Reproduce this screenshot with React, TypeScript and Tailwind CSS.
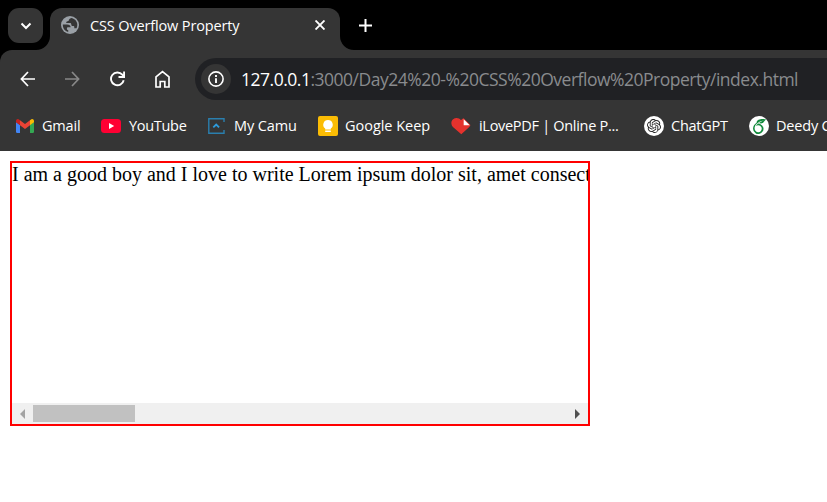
import type { ReactNode } from "react";
import { SiOpenai, SiOverleaf } from "react-icons/si";

const Globe = () => (
  <svg width="18" height="18" viewBox="0 0 18 18">
    <circle cx="9" cy="9" r="9" fill="#9aa0a6" />
    <path d="M1.800 8.600h4.200c2.400 0 3.600.9 3.600 2.700H7.300c-.9 0-1.400.5-1.400 1.400 0 .8.500 1.300 1.300 1.300v2C4 15.400 1.800 12.500 1.800 8.600z" fill="#353535" />
    <path d="M10.800 1.900C9.400 2.100 7.900 2.900 7.900 4.100c0 .8-.5 1.100-1.300 1.200-1 .2-1.400.8-1.400 1.600h3.800c.9 0 1.300.7 1.300 1.500 0 1 .7 1.500 1.600 1.500h.5c.7 0 .9.5.9 1.200v1.100h2.300c2-4.600-.300-9-4.800-10.300z" fill="#353535" />
  </svg>
);

const Gmail = () => (
  <svg width="18" height="14" viewBox="0 0 18 14">
    <path d="M0 3l4 3v8H1.300A1.300 1.300 0 0 1 0 12.700z" fill="#4285f4" />
    <path d="M14 6l4-3v9.700a1.300 1.300 0 0 1-1.300 1.300H14z" fill="#34a853" />
    <path d="M4 1.300l5 3.800 5-3.800V6.300L9 10 4 6.300z" fill="#ea4335" />
    <path d="M0 3V2C0 .2 2-.6 3.300.7L4 1.300v5L0 3.300z" fill="#c5221f" />
    <path d="M18 3V2c0-1.800-2-2.600-3.300-1.300l-.7.6v5l4-3z" fill="#fbbc04" />
  </svg>
);

const YouTube = () => (
  <svg width="20" height="14" viewBox="0 0 20 14">
    <rect width="20" height="14" rx="3.500" fill="#ff0033" />
    <path d="M8 4l5.200 3L8 10z" fill="#fff" />
  </svg>
);

const Camu = () => (
  <svg width="17" height="16" viewBox="0 0 17 16" fill="none" stroke="#2a7fae" strokeWidth="1.400">
    <path d="M16 4V.8H.8v14.400H16V12" />
    <path d="M5.300 9.400L8.200 6.500l2.900 2.900" stroke="#2d9bdb" strokeWidth="1.800" />
  </svg>
);

const Keep = () => (
  <svg width="20" height="20" viewBox="0 0 20 20">
    <rect width="20" height="20" rx="2" fill="#fbbc04" />
    <path d="M10 4a4.700 4.700 0 0 0-2.800 8.500V13.500h5.600v-1A4.700 4.700 0 0 0 10 4zM7.200 14.500h5.600V16H7.200z" fill="#fff" />
  </svg>
);

const LovePdf = () => (
  <svg width="20" height="18" viewBox="0 0 20 18">
    <path d="M10.300 17.300L2.200 10.200C-.3 7.800-.2 4 2.100 2.200 4.700.1 8.200.7 10 3.300 10.700 2.300 11.600 1.600 12.600 1.300L19.400 8C19.200 9 18.700 9.600 18 10.300z" fill="#e5322d" />
    <path d="M12.700 2.300l6 6h-6z" fill="#fff" />
  </svg>
);

const ChatGpt = () => (
  <span className="flex size-5 items-center justify-center rounded-full bg-white">
    <SiOpenai size={14} color="#222222" />
  </span>
);

const Overleaf = () => (
  <span className="flex size-5 items-center justify-center rounded-full bg-white">
    <SiOverleaf size={15} color="#138a3d" />
  </span>
);

type Bookmark = { label: string; icon: ReactNode; item: string; slot: string; text: string };

const bookmarks: Bookmark[] = [
  { label: "Gmail", icon: <Gmail />, item: "w-[85px]", slot: "w-[26px]", text: "tracking-[-0.2px]" },
  { label: "YouTube", icon: <YouTube />, item: "w-[107px]", slot: "w-[28px]", text: "tracking-[-0.3px]" },
  { label: "My Camu", icon: <Camu />, item: "w-[110px]", slot: "w-[26px]", text: "tracking-[-0.1px]" },
  { label: "Google Keep", icon: <Keep />, item: "w-[133px]", slot: "w-[27px]", text: "tracking-[-0.03px]" },
  { label: "iLovePDF | Online P...", icon: <LovePdf />, item: "w-[193px]", slot: "w-[28px]", text: "tracking-[-0.3px]" },
  { label: "ChatGPT", icon: <ChatGpt />, item: "w-[105px]", slot: "w-[27px]", text: "tracking-[-0.25px]" },
  { label: "Deedy CV", icon: <Overleaf />, item: "w-[110px]", slot: "w-[27px]", text: "tracking-[-0.2px]" },
];

function TabStrip() {
  return (
    <div className="flex h-[50px] pl-2 pt-2">
      <div className="flex size-[35px] items-center justify-center rounded-[11px] bg-[#353535]">
        <svg width="12" height="8" viewBox="0 0 12 8" fill="none" stroke="#fff" strokeWidth="2">
          <path d="M1.500 1.500L6 6l4.500-4.500" />
        </svg>
      </div>
      <div className="relative ml-[7px] flex h-[42px] w-[290px] items-center rounded-t-[12px] bg-[#353535] pb-[8px] pl-[11px]">
        <svg className="absolute -left-[14px] bottom-0" width="14" height="14" viewBox="0 0 14 14">
          <path d="M14 0v14H0A14 14 0 0 0 14 0z" fill="#353535" />
        </svg>
        <svg className="absolute -right-[14px] bottom-0" width="14" height="14" viewBox="0 0 14 14">
          <path d="M0 0v14h14A14 14 0 0 1 0 0z" fill="#353535" />
        </svg>
        <Globe />
        <span className="ml-[11px] w-[225px] pt-px text-[14.5px] tracking-[-0.14px]">CSS Overflow Property</span>
        <svg width="10" height="10" viewBox="0 0 10 10" className="shrink-0" stroke="#fff" strokeWidth="1.900">
          <path d="M.5.5l9 9M9.500.5l-9 9" />
        </svg>
      </div>
      <svg className="ml-[19px] mt-[11px]" width="13" height="13" viewBox="0 0 13 13" stroke="#fff" strokeWidth="2">
        <path d="M6.500 0v13M0 6.500h13" />
      </svg>
    </div>
  );
}

function Toolbar() {
  return (
    <div className="flex h-[58px] items-center pl-[20px]">
      <svg className="shrink-0" width="15" height="16" viewBox="0 0 15 16" fill="none" stroke="#fff" strokeWidth="1.700">
        <path d="M15 8H1.500M8 1L1.400 8 8 15" />
      </svg>
      <svg className="ml-[30px] shrink-0" width="15" height="16" viewBox="0 0 15 16" fill="none" stroke="#888888" strokeWidth="1.700">
        <path d="M0 8h13.500M7 1l6.600 7L7 15" />
      </svg>
      <svg className="ml-[30px] shrink-0" width="15" height="16" viewBox="0 0 15 16" fill="none" stroke="#fff" strokeWidth="1.900">
        <path d="M13.700 9.200A6.400 6.400 0 1 1 12.300 3.700L14 5.500M14.100.5v5.500H8.500" />
      </svg>
      <svg className="ml-[30px] shrink-0" width="15" height="18" viewBox="0 0 15 18" fill="none" stroke="#fff" strokeWidth="1.700">
        <path d="M1 6.800L7.500 1.500 14 6.800V17H9.800v-5.500H5.200V17H1z" />
      </svg>
      <div className="ml-[25px] flex h-[42px] min-w-0 flex-1 items-center rounded-l-[21px] bg-[#202124] pl-[6px]">
        <span className="flex size-[30px] shrink-0 items-center justify-center rounded-full bg-[#353535]">
          <svg width="16" height="16" viewBox="0 0 16 16" fill="none" stroke="#fff" strokeWidth="1.600">
            <circle cx="8" cy="8" r="7.100" />
            <path d="M8 7.200V12M8 4v1.900" strokeWidth="1.900" />
          </svg>
        </span>
        <span className="ml-[10px] whitespace-nowrap text-[17.5px] tracking-[-0.49px] text-[#898b8e]">
          <span className="text-white">127.0.0.1</span>:3000/Day24%20-%20CSS%20Overflow%20Property/index.html
        </span>
      </div>
    </div>
  );
}

function Bookmarks() {
  return (
    <div className="flex h-[43px] items-center pb-[7px] pl-4">
      {bookmarks.map((b) => (
        <div key={b.label} className={`flex h-full shrink-0 items-center ${b.item}`}>
          <span className={`flex shrink-0 ${b.slot}`}>{b.icon}</span>
          <span className={`whitespace-nowrap text-[14.5px] ${b.text}`}>{b.label}</span>
        </div>
      ))}
    </div>
  );
}

function OverflowBox() {
  return (
    <div className="flex h-[265px] w-[580px] flex-col border-2 border-[#ff0000]">
      <p className="flex-1 overflow-hidden whitespace-nowrap font-['Liberation_Serif',serif] text-[20px] leading-[23px] text-black">
        I am a good boy and I love to write Lorem ipsum dolor sit, amet consectetur adipisicing elit.
      </p>
      <div className="flex h-[21px] items-center bg-[#f0f0f0] pl-2 pr-[8px]">
        <svg width="5" height="10" viewBox="0 0 5 10"><path d="M5 0v10L0 5z" fill="#a3a3a3" /></svg>
        <div className="ml-2 h-[17px] w-[102px] bg-[#c1c1c1]" />
        <svg className="ml-auto" width="5" height="10" viewBox="0 0 5 10"><path d="M0 0v10l5-5z" fill="#505050" /></svg>
      </div>
    </div>
  );
}

export default function App() {
  return (
    <div className="h-[502px] w-[827px] overflow-hidden bg-white font-['Open_Sans',sans-serif] text-white">
      <div className="bg-black">
        <TabStrip />
        <div className="h-[101px] overflow-hidden rounded-tl-[12px] bg-[#353535]">
          <Toolbar />
          <Bookmarks />
        </div>
      </div>
      <main className="pl-[10px] pt-[10px]">
        <OverflowBox />
      </main>
    </div>
  );
}
